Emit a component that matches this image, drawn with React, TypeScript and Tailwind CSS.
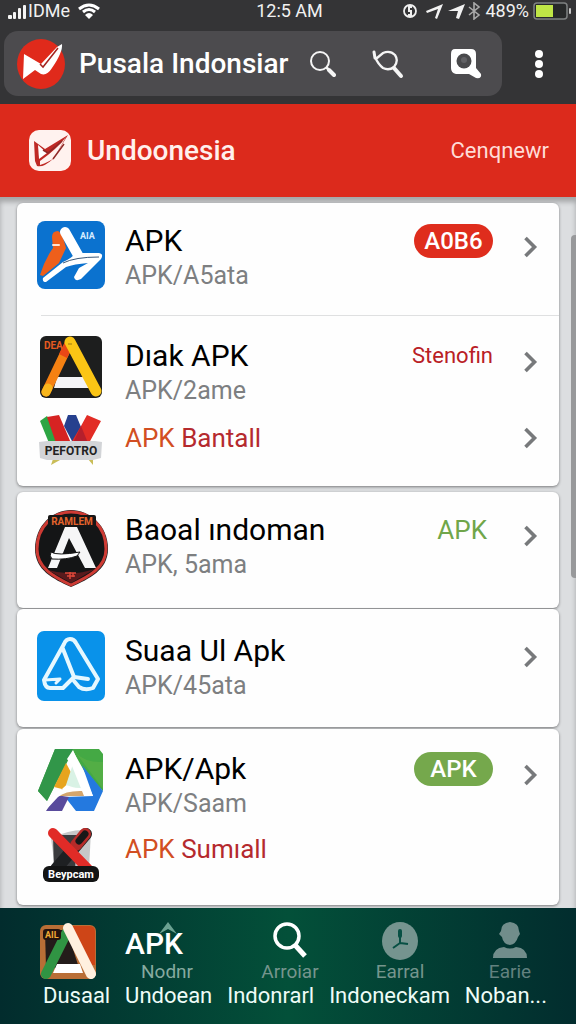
import type { ReactNode } from "react";

type RowProps = {
  icon: ReactNode;
  title: string;
  detail: string;
  tag?: ReactNode;
  className: string;
};

function Chevron() {
  return (
    <svg className="w-4 h-6 shrink-0" viewBox="0 0 16 24" fill="none">
      <path d="M3.5 3L12.5 12L3.5 21" stroke="#77797b" strokeWidth="3.6" />
    </svg>
  );
}

function AppRow({ icon, title, detail, tag, className }: RowProps) {
  return (
    <a href="#" className={`flex items-start pl-[18px] pr-[21px] ${className}`}>
      <span className="w-[72px] h-[70px] shrink-0 flex items-start justify-center">{icon}</span>
      <span className="flex-1 min-w-0 pl-[18px] pt-[2px]">
        <span className="block text-[30px] leading-9 text-black whitespace-nowrap">{title}</span>
        <span className="block text-[25px] leading-[34px] text-[#7d7f81] whitespace-nowrap">{detail}</span>
      </span>
      {tag && <span className="h-10 flex items-center">{tag}</span>}
      <span className="h-[52px] flex items-center pl-[29px]">
        <Chevron />
      </span>
    </a>
  );
}

function InstallRow({ icon, label, arrow }: { icon: ReactNode; label: string; arrow?: boolean }) {
  return (
    <a href="#" className="flex items-center h-[52px] pl-[18px] pr-[21px]">
      <span className="w-[72px] shrink-0 flex justify-center">{icon}</span>
      <span className="flex-1 pl-[18px] text-[26px] leading-9 whitespace-nowrap text-[#b52a2e]">
        <span className="text-[#d24e22]">APK</span> {label}
      </span>
      {arrow && <Chevron />}
    </a>
  );
}

function Card({ children }: { children: ReactNode }) {
  return <section className="bg-[#fefefe] rounded-md shadow-[0_1px_3px_rgba(0,0,0,0.45)]">{children}</section>;
}

/* App icons */

function BlueRunnerIcon() {
  return (
    <svg className="w-[68px] h-[68px]" viewBox="0 0 68 68">
      <rect width="68" height="68" rx="8" fill="#0b72cf" />
      <path d="M15 16Q15 10 21 10Q25 11 29 27L22 42L6 55L3 54Q8 38 16 27Z" fill="#ee5f1b" />
      <path d="M16 24h6" stroke="#ffe3d2" strokeWidth="2" strokeLinecap="round" />
      <path d="M28 11L41 34" stroke="#fff" strokeWidth="10" strokeLinecap="round" />
      <path d="M38 32L62 32Q67 33 64 38L44 58Q38 61 37 56L42 47L51 42Q37 43 29 46L9 61Q5 61 6 57L26 41Q37 36 38 32Z" fill="#fff" />
      <path d="M26 42Q38 36 62 36" fill="none" stroke="#3a5878" strokeWidth="1" />
      <text x="43" y="18" fontSize="9" fontWeight="700" fill="#d7ecff" fontFamily="Roboto, sans-serif">AIA</text>
    </svg>
  );
}

function DarkTriangleIcon() {
  return (
    <svg className="w-[62px] h-[62px]" viewBox="0 0 62 62">
      <rect width="62" height="62" rx="6" fill="#1d1e1e" />
      <path d="M17 41h29l3 11H14z" fill="#f4f4f6" />
      <path d="M6 56L29 8" stroke="#f58112" strokeWidth="9" strokeLinecap="round" />
      <path d="M23 20L29 8" stroke="#e94716" strokeWidth="9" />
      <path d="M6 56L8 52" stroke="#f8b61c" strokeWidth="9" strokeLinecap="round" />
      <path d="M30 6L56 55" stroke="#fbc515" strokeWidth="11" strokeLinecap="round" />
      <path d="M28 8h4" stroke="#9c7b12" strokeWidth="1" />
      <text x="4" y="13" fontSize="10" fontWeight="700" fill="#e75a20" fontFamily="Roboto, sans-serif">DEA</text>
    </svg>
  );
}

function RibbonIcon() {
  return (
    <svg className="w-[64px] h-[52px] mt-1" viewBox="0 0 64 52">
      <path d="M1 7L8 2L23 29H10z" fill="#2da543" />
      <path d="M8 3L20 1L32 29H17z" fill="#d62322" />
      <path d="M29 1h8l5 12l-8 16l-9-17z" fill="#26408e" />
      <path d="M42 12L48 1L62 7L50 29H32z" fill="#e22c25" />
      <path d="M34 29L42 12L49 29z" fill="#b51f2c" />
      <path d="M14 45l-2 6l9-5zM49 45l5 6v-6z" fill="#c9bd58" />
      <path d="M0 28L8 27H56L63 28L62 44L54 46H8L1 44z" fill="#d2d4d7" />
      <text x="32" y="41" textAnchor="middle" fontSize="12" fontWeight="700" fill="#222" fontFamily="Roboto, sans-serif">PEFOTRO</text>
    </svg>
  );
}

function BadgeIcon() {
  return (
    <svg className="w-[73px] h-[77px] shrink-0" viewBox="0 0 73 77">
      <path d="M36 0C54 0 73 15 73 39C73 60 54 69 36 77C18 69 0 60 0 39C0 15 18 0 36 0Z" fill="#202021" />
      <path d="M36 2C54 2 71 16 71 39C71 58 53 67 36 75C19 67 2 58 2 39C2 16 19 2 36 2Z" fill="#141516" stroke="#ce3b34" strokeWidth="3" />
      <rect x="13" y="5" width="48" height="12" rx="2" fill="#161616" />
      <text x="37" y="15" textAnchor="middle" fontSize="10" fontWeight="700" fill="#e4632c" fontFamily="Roboto, sans-serif">RAMLEM</text>
      <path d="M30 17H42L61 58H50L34 28L22 58H13Z" fill="#f6f6f7" />
      <path d="M16 42Q22 46 45 42L42 46Q31 50 17 49Q14 46 16 42Z" fill="#fff" stroke="#161616" strokeWidth="1" />
      <path d="M13 60Q36 67 60 59L36 73Z" fill="#591a1c" />
      <path d="M30 63h11M32 66h8M35 62v7M38 63v4" stroke="#e0483a" strokeWidth="1.5" />
    </svg>
  );
}

function BlueOutlineIcon() {
  return (
    <svg className="w-[68px] h-[70px]" viewBox="0 0 68 70">
      <rect width="68" height="70" rx="7" fill="#0992ea" />
      <g fill="none" stroke="#e6f8ff" strokeWidth="4" strokeLinejoin="round" strokeLinecap="round">
        <path d="M37 46L26 57H13Q8 57 7 49L27 13Q29 8 33 8Q37 8 39 12L61 48L56 57Q48 60 42 56L37 50" />
        <path d="M26 18L37 46L51 48" />
        <path d="M8 49L23 48L19 52" strokeWidth="3" />
      </g>
    </svg>
  );
}

function ColorPolyIcon() {
  return (
    <svg className="w-[66px] h-[63px]" viewBox="0 0 66 63">
      <path d="M17 0H61L65 5V42L49 27L35 2L9 52L0 42Z" fill="#44a944" />
      <path d="M17 0H35L9 52L0 42Z" fill="#319649" />
      <path d="M16 38L28 14L36 29L24 40Z" fill="#e7a41d" />
      <path d="M35 15L47 42L28 36Z" fill="#d9f2e5" />
      <path d="M44 16L65 42L56 62H38L27 48L55 47Z" fill="#2479df" />
      <path d="M8 62L18 46L31 48L24 62Z" fill="#594b9c" />
      <path d="M24 40H46V47H20Z" fill="#d4a66d" />
      <path d="M29 10L35 1L55 47H46L34 17Z" fill="#fff" />
      <path d="M7 62Q12 42 29 39Q42 38 46 40V42Q28 41 20 48Z" fill="#fff" />
      <path d="M38 4Q48 14 65 13V40Z" fill="#65b348" opacity=".45" />
    </svg>
  );
}

function CrossIcon() {
  return (
    <svg className="w-[60px] h-[59px] mt-3" viewBox="0 0 60 59">
      <path d="M10 12Q35 1 50 5L48 43H14Z" fill="#c6c7c8" />
      <path d="M12 9H36L34 45H13Z" fill="#3a3b3e" />
      <path d="M15 43L45 8" stroke="#1e2022" strokeWidth="12" strokeLinecap="round" />
      <path d="M35 19L44 8" stroke="#b72b29" strokeWidth="12" strokeLinecap="round" />
      <path d="M38 15L44 8" stroke="#181818" strokeWidth="7" strokeLinecap="round" />
      <path d="M12 7L47 43" stroke="#e12b27" strokeWidth="10" strokeLinecap="round" />
      <rect x="2" y="40" width="56" height="16" rx="6" fill="#131414" />
      <text x="30" y="52" textAnchor="middle" fontSize="11" fontWeight="700" fill="#fff" fontFamily="Roboto, sans-serif">Beypcam</text>
    </svg>
  );
}

function HomeAppIcon() {
  return (
    <svg className="w-[58px] h-[58px]" viewBox="0 0 58 58">
      <rect x="1" y="3" width="56" height="54" rx="6" fill="#b96e36" />
      <path d="M6 8H28L40 46H7Z" fill="#241c1a" />
      <path d="M30 4H51Q56 4 56 10V43H49Z" fill="#ce4517" />
      <path d="M18 42H41L44 51H14Z" fill="#fff" />
      <path d="M7 52L29 8" stroke="#309443" strokeWidth="10" strokeLinecap="round" />
      <path d="M29 6L52 52" stroke="#fff0df" strokeWidth="10" strokeLinecap="round" />
      <rect x="4" y="7" width="18" height="11" rx="3" fill="#24130e" />
      <text x="6" y="16" fontSize="9" fontWeight="700" fill="#f1aa35" fontFamily="Roboto, sans-serif">AIL</text>
    </svg>
  );
}

function StatusBar() {
  return (
    <div className="grid grid-cols-[1fr_auto_1fr] items-center h-[22px] pl-2 pr-[5px] text-[18px] leading-[22px] text-[#f1f1f1]">
      <div className="flex items-center">
        <svg className="w-5 h-4" viewBox="0 0 20 16" fill="#f4f4f4">
          <rect y="12" width="4" height="4" rx="1" />
          <rect x="5" y="9" width="3" height="7" rx="1" />
          <rect x="10" y="5" width="3" height="11" rx="1" />
          <rect x="15" y="2" width="3" height="14" rx="1" />
        </svg>
        <span>IDMe</span>
        <svg className="w-[22px] h-4 ml-2" viewBox="0 0 22 16" fill="none" stroke="#fff" strokeWidth="3">
          <path d="M1 6Q11 -2 21 6M5 9Q11 4 17 9" />
          <path d="M7 12Q11 8 15 12L11 16Z" fill="#fff" stroke="none" />
        </svg>
      </div>
      <span className="whitespace-nowrap">12:5 AM</span>
      <div className="flex items-center justify-end">
        <svg className="w-[78px] h-[18px]" viewBox="0 0 78 18" fill="none" stroke="#efefef" strokeWidth="2">
          <circle cx="7" cy="9" r="6" strokeWidth="1.8" />
          <path d="M9 5H6V9H8V13H5" />
          <path d="M23 9L40 2L34 17L32 16L35 7L24 11Z" fill="#f2f2f2" stroke="none" />
          <path d="M45 9L62 2L56 17L53 16L55 9Z" fill="#f2f2f2" stroke="none" />
          <path d="M66 5L76 13L71 17V1L76 5L66 13" stroke="#aaa" strokeWidth="1.6" />
        </svg>
        <span className="ml-1 mr-1">489%</span>
        <svg className="w-[38px] h-[18px]" viewBox="0 0 38 18">
          <rect x="1" y="1" width="33" height="16" rx="3" fill="#27292a" stroke="#7e8182" strokeWidth="1.5" />
          <rect x="3" y="3" width="17" height="12" fill="#bfe646" />
          <rect x="36" y="6" width="2" height="6" rx="1" fill="#c8c8c8" />
        </svg>
      </div>
    </div>
  );
}

function Toolbar() {
  return (
    <div className="flex items-center pt-[9px] pb-2 pl-1">
      <div className="flex-1 min-w-0 h-[65px] flex items-center rounded-[14px] bg-[#4c4b4e] pl-3 pr-5">
        <svg className="w-[50px] h-[52px] shrink-0" viewBox="0 0 50 52">
          <ellipse cx="25" cy="26" rx="24" ry="25" fill="#e02a1b" />
          <path d="M7 41L8 16L25 26L41 9L46 6Q47 14 36 30Q31 38 25 36L19 32Z" fill="#fff" />
          <path d="M24 26L27 29L42 10" fill="none" stroke="#a42420" strokeWidth="1.5" />
        </svg>
        <h1 className="flex-1 min-w-0 ml-[13px] overflow-hidden whitespace-nowrap text-[28px] leading-9 font-medium text-white">
          Pusala Indonsiar
        </h1>
        <div className="flex items-center ml-[13px]">
          <button type="button" aria-label="Search">
            <svg className="w-[26px] h-[28px]" viewBox="0 0 26 28" fill="none" stroke="#f5f5f5" strokeLinecap="round">
              <circle cx="10" cy="11" r="9" strokeWidth="2" />
              <path d="M17 18L18 19" strokeWidth="2.5" />
              <path d="M19 20L24 25" strokeWidth="4" />
            </svg>
          </button>
          <button type="button" aria-label="Search again" className="ml-9">
            <svg className="w-8 h-[30px]" viewBox="0 0 32 30" fill="none" stroke="#f5f5f5" strokeLinecap="round">
              <path d="M3 8Q6 15 11 19Q17 22 22 18Q27 12 23 6Q18 1 11 4L5 9" strokeWidth="2.3" />
              <path d="M2 3L3 9" strokeWidth="3" />
              <path d="M22 19L29 27" strokeWidth="4" />
            </svg>
          </button>
          <button type="button" aria-label="Find in page" className="ml-[46px]">
            <svg className="w-8 h-8" viewBox="0 0 32 32">
              <path d="M5 1H21Q26 1 26 6V20L31 26Q32 31 26 30L19 26H6Q1 25 1 20V6Q1 1 5 1Z" fill="#fff" />
              <circle cx="14" cy="13" r="7.5" fill="#49494b" />
              <circle cx="14" cy="12" r="3" fill="#616164" />
            </svg>
          </button>
        </div>
      </div>
      <button type="button" aria-label="More options" className="w-[74px] flex justify-center">
        <svg className="w-2 h-7" viewBox="0 0 8 28" fill="#fff">
          <circle cx="4" cy="4" r="4" />
          <circle cx="4" cy="14" r="4" />
          <circle cx="4" cy="24" r="4" />
        </svg>
      </button>
    </div>
  );
}

function Banner() {
  return (
    <div className="flex items-center h-[93px] pl-[29px] pr-[27px] bg-[#dc2a1c] text-white">
      <svg className="w-[42px] h-[41px] shrink-0" viewBox="0 0 42 41">
        <rect width="42" height="41" rx="10" fill="#fff2ef" />
        <path d="M5 11L16 19L39 5L24 29Q14 38 8 36L6 31Z" fill="#bf2925" />
        <path d="M9 15L18 23L10 29Z" fill="#fff" />
        <path d="M11 31Q29 18 37 7L25 28Q20 32 11 35Z" fill="#fff2ef" />
        <path d="M24 29L35 14M14 20L19 23L33 11" fill="none" stroke="#8f2928" strokeWidth="1.5" />
      </svg>
      <h2 className="ml-4 text-[28px] leading-9 font-medium text-[#fff0ed]">Undoonesia</h2>
      <a href="#" className="ml-auto text-[22px] leading-8 text-[#ffdcd7]">Cenqnewr</a>
    </div>
  );
}

function BottomNav() {
  return (
    <nav className="pt-[14px] pb-4 bg-linear-to-r from-[#022c2d] via-[#035039] to-[#022d2e] text-[#75958d]">
      <div className="grid grid-cols-[86px_1fr_1fr_1fr_1fr] pl-[39px] pr-[11px] text-[19px] leading-5">
        <a href="#" aria-label="Home">
          <HomeAppIcon />
        </a>
        <a href="#" className="relative flex flex-col items-start">
          <svg className="absolute left-[33px] top-0 w-5 h-3" viewBox="0 0 20 12">
            <path d="M1 12L10 0L19 12L10 7Z" fill="#6ba191" />
          </svg>
          <span className="h-10 pt-1 text-[30px] leading-9 text-white font-medium">APK</span>
          <span className="pl-4 text-[#86aaa0]">Nodnr</span>
        </a>
        <a href="#" className="flex flex-col items-center">
          <svg className="w-9 h-10" viewBox="0 0 36 40" fill="none" stroke="#fff">
            <circle cx="15" cy="14" r="12" strokeWidth="3.5" />
            <path d="M23 23L33 34" strokeWidth="5" />
          </svg>
          <span>Arroiar</span>
        </a>
        <a href="#" className="flex flex-col items-center">
          <svg className="w-9 h-10" viewBox="0 0 36 40">
            <ellipse cx="18" cy="19" rx="18" ry="19" fill="#75948f" />
            <path d="M18 8V21M18 21L11 26M18 21L26 22" fill="none" stroke="#075044" strokeWidth="2" />
            <path d="M18 9V14" stroke="#075044" strokeWidth="4" strokeLinecap="round" />
          </svg>
          <span>Earral</span>
        </a>
        <a href="#" className="flex flex-col items-center text-[#62817f]">
          <svg className="w-9 h-10" viewBox="0 0 36 40" fill="#718d8b">
            <path d="M18 0Q27 1 27 9L28 12L26 15Q24 22 18 23Q11 22 10 15L7 12L9 9Q9 1 18 0Z" />
            <path d="M1 36Q1 26 12 25Q18 28 24 25Q35 26 35 36Z" />
          </svg>
          <span>Earie</span>
        </a>
      </div>
      <p className="flex justify-between pt-[2px] pl-[43px] pr-[29px] text-[22px] leading-6 text-[#eefcf7] whitespace-nowrap">
        <span>Dusaal</span>
        <span>Undoean</span>
        <span>Indonrarl</span>
        <span>Indoneckam</span>
        <span>Noban...</span>
      </p>
    </nav>
  );
}

export default function App() {
  return (
    <div className="min-h-screen flex flex-col bg-[#dcdee0] font-[Roboto,'Liberation_Sans',sans-serif]">
      <header>
        <div className="bg-[#343436]">
          <StatusBar />
          <Toolbar />
        </div>
        <Banner />
      </header>

      <main className="relative flex-1 pt-[6px] pl-[17px] pr-[17px] shadow-[inset_0_5px_5px_rgba(0,0,0,0.25)]">
        <div className="flex flex-col">
          <Card>
            <AppRow
              icon={<BlueRunnerIcon />}
              title="APK"
              detail="APK/A5ata"
              tag={
                <span className="w-[79px] h-[34px] rounded-full bg-[#df2d1d] text-white text-[24px] leading-[34px] font-medium text-center">
                  A0B6
                </span>
              }
              className="pt-[18px] pb-[22px]"
            />
            <hr className="ml-6 border-[#dfe0e1]" />
            <AppRow
              icon={<DarkTriangleIcon />}
              title="Dıak APK"
              detail="APK/2ame"
              tag={<span className="text-[22px] leading-8 text-[#b92025]">Stenofin</span>}
              className="pt-5 pb-1"
            />
            <InstallRow icon={<RibbonIcon />} label="Bantall" arrow />
            <div className="h-[22px]" />
          </Card>
          <div className="h-[6px]" />
          <Card>
            <AppRow
              icon={<BadgeIcon />}
              title="Baoal ındoman"
              detail="APK, 5ama"
              tag={<span className="pr-[6px] text-[26px] leading-8 text-[#70a64a]">APK</span>}
              className="pt-[18px] pb-[26px]"
            />
          </Card>
          <div className="h-px" />
          <Card>
            <AppRow icon={<BlueOutlineIcon />} title="Suaa Ul Apk" detail="APK/45ata" className="pt-[22px] pb-6" />
          </Card>
          <div className="h-[2px]" />
          <Card>
            <AppRow
              icon={<ColorPolyIcon />}
              title="APK/Apk"
              detail="APK/Saam"
              tag={
                <span className="w-[79px] h-[34px] rounded-full bg-[#75a84c] text-white text-[24px] leading-[34px] font-medium text-center">
                  APK
                </span>
              }
              className="pt-5 pb-[2px]"
            />
            <InstallRow icon={<CrossIcon />} label="Sumıall" />
            <div className="h-[30px]" />
          </Card>
        </div>
        {/* Scroll thumb */}
        <div className="absolute right-0 top-[38px] w-[5px] h-[343px] rounded-l bg-[#98999b]" />
      </main>

      <BottomNav />
    </div>
  );
}
